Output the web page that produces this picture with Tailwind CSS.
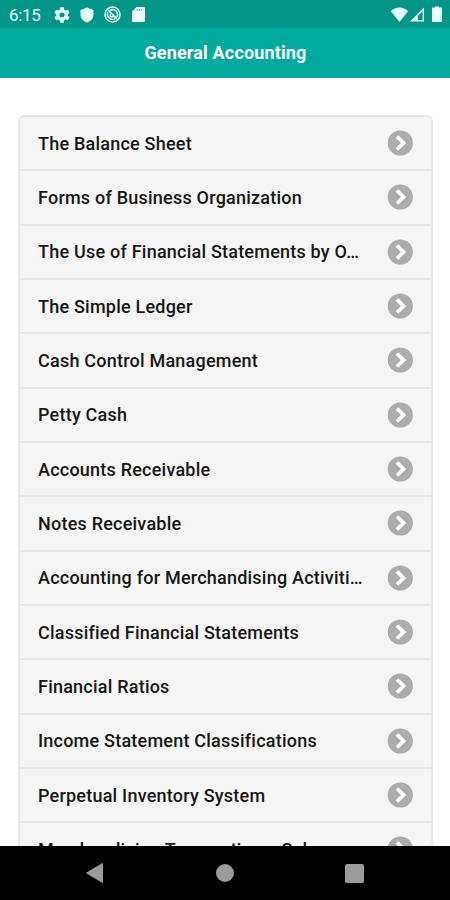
<!DOCTYPE html>
<html lang="en">
  <head>
    <meta charset="UTF-8" />
    <meta name="viewport" content="width=device-width, initial-scale=1.0" />
    <title>General Accounting</title>
    <script src="https://cdn.jsdelivr.net/npm/@tailwindcss/browser@4"></script>
  </head>
  <body class="bg-white">
    <div
      class="flex flex-col w-[450px] h-[900px] overflow-hidden font-['Roboto',sans-serif]"
    >
      <!-- Status bar -->
      <div
        class="flex shrink-0 items-center h-7 pl-[9px] pr-2 bg-[#029688] text-[#e9fffc]"
      >
        <span class="w-[44px] text-[17px] leading-none tracking-[-0.3px] pt-[2px]">6:15</span>
        <svg class="w-4 h-4 mt-px ml-px" viewBox="2 2 20 20" fill="currentColor">
          <path
            d="M19.14 12.94c.04-.3.06-.61.06-.94 0-.32-.02-.64-.07-.94l2.03-1.58c.18-.14.23-.41.12-.61l-1.92-3.32c-.12-.22-.37-.29-.59-.22l-2.39.96c-.5-.38-1.03-.7-1.62-.94l-.36-2.54c-.04-.24-.24-.41-.48-.41h-3.84c-.24 0-.43.17-.47.41l-.36 2.54c-.59.24-1.13.57-1.62.94l-2.39-.96c-.22-.08-.47 0-.59.22L2.74 8.87c-.12.21-.08.47.12.61l2.03 1.58c-.05.3-.09.63-.09.94s.02.64.07.94l-2.03 1.58c-.18.14-.23.41-.12.61l1.92 3.32c.12.22.37.29.59.22l2.39-.96c.5.38 1.03.7 1.62.94l.36 2.54c.05.24.24.41.48.41h3.84c.24 0 .44-.17.47-.41l.36-2.54c.59-.24 1.13-.56 1.62-.94l2.39.96c.22.08.47 0 .59-.22l1.92-3.32c.12-.22.07-.47-.12-.61l-2.01-1.58zM12 15.2c-1.77 0-3.2-1.43-3.2-3.2s1.43-3.2 3.2-3.2 3.2 1.43 3.2 3.2-1.43 3.2-3.2 3.2z"
          />
        </svg>
        <svg class="w-[14px] h-4 ml-[10px] mt-px" viewBox="0 0 14 16" fill="currentColor">
          <path d="M7 .5L13.500 3v4.700c0 3.600-2.800 6.500-6.500 7.800C3.300 14.200.5 11.300.5 7.700V3z" />
        </svg>
        <svg
          class="w-[17px] h-[17px] ml-[10px] mt-px"
          viewBox="0 0 17 17"
          fill="none"
          stroke="currentColor"
        >
          <circle cx="8.500" cy="8.500" r="7.500" stroke-width="1.500" />
          <path d="M4.300 4.300l8.600 8.600" stroke-width="1.600" />
          <path d="M6 4.300a5 5 0 0 1 6.900 6.700M10.800 12.900A5 5 0 0 1 4 6.300" stroke-width="1.400" />
          <path d="M6.300 8v2.700h3" stroke-width="1.400" />
        </svg>
        <svg class="w-[13px] h-[15px] ml-[11px] mt-px" viewBox="0 0 13 15" fill="currentColor">
          <path
            fill-rule="evenodd"
            d="M4.600 0H11.700C12.400 0 13 .6 13 1.300V13.700c0 .7-.6 1.300-1.300 1.300H1.300C.6 15 0 14.400 0 13.700V4.600zM4.700 2.200v1.600h1v-1.600zM7 2.200v1.600h1v-1.600zM9.300 2.200v1.600h1v-1.600z"
          />
        </svg>
        <svg class="w-[17px] h-[15px] ml-auto" viewBox="0 0 17 15" fill="currentColor">
          <path d="M8.500 15L0 4.300C2.300 1.700 5.200.5 8.500.5s6.200 1.200 8.500 3.800z" />
        </svg>
        <svg class="w-[14px] h-[15px] ml-[2px]" viewBox="0 0 15 15" fill="currentColor">
          <path fill-rule="evenodd" d="M15 0v15H0zM13.500 4v9.500H8.300V9.200z" />
        </svg>
        <svg class="w-[10px] h-4 ml-2" viewBox="0 0 10 16" fill="currentColor">
          <path
            d="M3 .5h4v1h2c.6 0 1 .4 1 1V15c0 .6-.4 1-1 1H1c-.6 0-1-.4-1-1V2.500c0-.6.4-1 1-1h2z"
          />
        </svg>
      </div>

      <!-- Title bar -->
      <header
        class="flex shrink-0 items-center justify-center h-[50px] pl-px bg-[#00aa9e] text-white"
      >
        <h1 class="text-lg font-bold tracking-[0.15px]">General Accounting</h1>
      </header>

      <!-- Topics -->
      <main class="flex-1 overflow-hidden pt-[37px] pl-[18px] pr-[17px]">
        <ul
          id="topics"
          class="rounded-md border-2 border-[#e8e8e8] bg-[#f5f5f5] shadow-xs"
        ></ul>
      </main>

      <!-- Navigation bar -->
      <nav class="flex shrink-0 items-center h-[54px] bg-black text-[#9b9b9b]">
        <svg class="w-[18px] h-5 ml-[86px]" viewBox="0 0 18 20" fill="currentColor">
          <path d="M16.500.5v19L.5 10z" stroke="currentColor" stroke-linejoin="round" />
        </svg>
        <div class="w-[18px] h-[18px] ml-[112px] rounded-full bg-current"></div>
        <div class="w-[19px] h-[19px] ml-[111px] rounded-xs bg-current"></div>
      </nav>
    </div>

    <script>
      const topics = [
        "The Balance Sheet",
        "Forms of Business Organization",
        "The Use of Financial Statements by O…",
        "The Simple Ledger",
        "Cash Control Management",
        "Petty Cash",
        "Accounts Receivable",
        "Notes Receivable",
        "Accounting for Merchandising Activiti…",
        "Classified Financial Statements",
        "Financial Ratios",
        "Income Statement Classifications",
        "Perpetual Inventory System",
        "Merchandising Transactions: Sales",
      ];

      document.getElementById("topics").innerHTML = topics
        .map(
          (topic) => `
          <li class="flex items-center h-[54.33px] px-[18px] border-b-2 border-[#e6e6e6]">
            <span class="pt-px whitespace-nowrap text-lg font-medium tracking-[0.22px] text-[#161616]">${topic}</span>
            <svg class="w-[26px] h-[26px] ml-auto shrink-0" viewBox="0 0 26 26" fill="none">
              <circle cx="13.300" cy="13" r="12.600" fill="#acacac" />
              <path d="M10 6.500l6.500 6.500-6.500 6.500" stroke="#fff" stroke-width="3.800" />
            </svg>
          </li>`
        )
        .join("");
    </script>
  </body>
</html>
